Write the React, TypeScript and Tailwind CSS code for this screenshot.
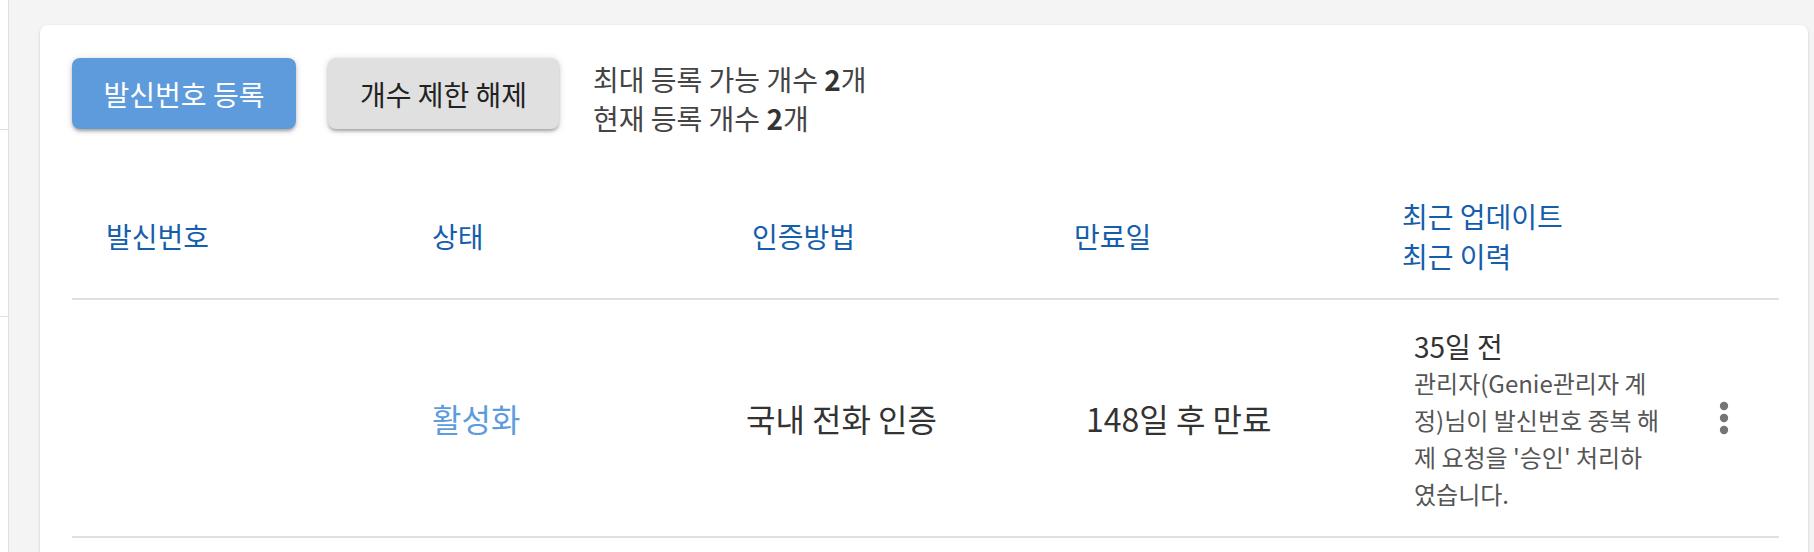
const headers = [
  ['발신번호'],
  ['상태'],
  ['인증방법'],
  ['만료일'],
  ['최근 업데이트', '최근 이력'],
];

const historyLines = [
  '관리자(Genie관리자 계',
  '정)님이 발신번호 중복 해',
  "제 요청을 '승인' 처리하",
  '였습니다.',
];

function Kebab() {
  return (
    <svg width="12" height="36" viewBox="0 0 12 36" className="text-[#757575]">
      <circle cx="6" cy="6" r="4.2" fill="currentColor" />
      <circle cx="6" cy="18" r="4.2" fill="currentColor" />
      <circle cx="6" cy="30" r="4.2" fill="currentColor" />
    </svg>
  );
}

export default function App() {
  return (
    <div className="flex h-[552px] w-full overflow-hidden bg-[#f4f4f4] font-['Noto_Sans_CJK_KR',sans-serif]">
      {/* 잘린 사이드바 */}
      <aside className="w-[9px] shrink-0 border-r border-[#e0e0e0] bg-white">
        <div className="h-[130px] border-b border-[#e0e0e0]" />
        <div className="h-[187px] border-b border-[#e0e0e0]" />
      </aside>

      <main className="flex-1 pl-[31px] pr-[6px] pt-[25px]">
        <section className="rounded-lg bg-white pb-10 pl-[32px] pr-[29px] pt-[33px] shadow-[0_1px_3px_rgba(0,0,0,0.12),0_1px_2px_rgba(0,0,0,0.08)]">
          {/* 상단 버튼 */}
          <div className="flex items-start">
            <button className="h-[71px] w-[224px] rounded-lg bg-[#5e9bdc] text-[28px] font-normal text-white shadow-[0_3px_3px_-1px_rgba(0,0,0,0.2),0_2px_4px_0_rgba(0,0,0,0.14),0_1px_8px_0_rgba(0,0,0,0.12)]">
              발신번호 등록
            </button>
            <button className="ml-[32px] h-[71px] w-[231px] rounded-lg bg-[#e0e0e0] text-[28px] font-normal text-[#222] shadow-[0_3px_3px_-1px_rgba(0,0,0,0.2),0_2px_4px_0_rgba(0,0,0,0.14),0_1px_8px_0_rgba(0,0,0,0.12)]">
              개수 제한 해제
            </button>
            <div className="ml-[34px] pt-[2px] text-[28px] leading-[39px] text-[#444]">
              <p>
                최대 등록 가능 개수 <b className="font-bold text-[#333]">2</b>개
              </p>
              <p>
                현재 등록 개수 <b className="font-bold text-[#333]">2</b>개
              </p>
            </div>
          </div>

          {/* 테이블 */}
          <div className="mt-[31px]">
            <div className="grid h-[131px] grid-cols-[326px_320px_322px_328px_1fr] items-center border-b-2 border-[#e0e0e0] text-[28px] leading-[40px] text-[#155eab]">
              {headers.map((lines, i) => (
                <div key={i} className="pl-[34px] pt-[4px]">
                  {lines.map((l) => (
                    <p key={l}>{l}</p>
                  ))}
                </div>
              ))}
            </div>

            <div className="grid h-[238px] grid-cols-[326px_320px_322px_328px_1fr] items-center border-b-2 border-[#e0e0e0] text-[32px] text-[#333]">
              <div className="pl-[34px]" />
              <div className="pl-[34px] text-[#5e9bdc]">활성화</div>
              <div className="pl-[28px]">국내 전화 인증</div>
              <div className="pl-[46px]">148일 후 만료</div>
              <div className="flex items-center justify-between pl-[46px] pr-[49px]">
                <div className="pt-[4px]">
                  <p className="text-[28px] leading-[36px] text-[#333]">35일 전</p>
                  <div className="text-[24px] leading-[37px] text-[#555]">
                    {historyLines.map((l) => (
                      <p key={l} className="whitespace-nowrap">
                        {l}
                      </p>
                    ))}
                  </div>
                </div>
                <Kebab />
              </div>
            </div>
          </div>
        </section>
      </main>
    </div>
  );
}
